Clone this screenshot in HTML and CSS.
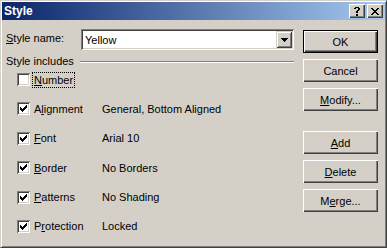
FILE: index.html
```html
<!DOCTYPE html>
<html lang="en">
<head>
    <meta charset="UTF-8">
    <title>Style</title>
    <link rel="stylesheet" href="styles.css">
</head>
<body>
<div class="window">
    <div class="titlebar">
        <span class="title">Style</span>
        <div class="caption-btns">
            <span class="cap-btn">
                <svg width="6" height="9" viewBox="0 0 6 9" shape-rendering="crispEdges"><path d="M1 0h4v1H1zM0 1h2v1H0zM4 1h2v2H4zM3 3h2v1H3zM2 4h2v2H2zM2 7h2v2H2z" fill="#000"/></svg>
            </span>
            <span class="cap-btn">
                <svg width="8" height="7" viewBox="0 0 8 7" shape-rendering="crispEdges"><path d="M0 0h2v1H0zM6 0h2v1H6zM1 1h2v1H1zM5 1h2v1H5zM2 2h4v1H2zM3 3h2v1H3zM2 4h4v1H2zM1 5h2v1H1zM5 5h2v1H5zM0 6h2v1H0zM6 6h2v1H6z" fill="#000"/></svg>
            </span>
        </div>
    </div>
    <div class="client">
        <div class="main">
            <div class="name-row">
                <span class="name-label"><u>S</u>tyle name:</span>
                <div class="combo">
                    <span class="combo-text">Yellow</span>
                    <span class="drop">
                        <svg width="7" height="4" viewBox="0 0 7 4" shape-rendering="crispEdges"><path d="M0 0h7v1H0zM1 1h5v1H1zM2 2h3v1H2zM3 3h1v1H3z" fill="#000"/></svg>
                    </span>
                </div>
            </div>
            <div class="group-head">
                <span>Style includes</span>
                <span class="etch"></span>
            </div>
            <div class="checks">
                <div class="row">
                    <span class="box"></span>
                    <span class="lbl focus"><u>N</u>umber</span>
                    <span class="val"></span>
                </div>
                <div class="row">
                    <span class="box"><svg width="7" height="7" viewBox="0 0 7 7" shape-rendering="crispEdges"><path d="M0 2h1v3H0zM1 3h1v3H1zM2 4h1v3H2zM3 3h1v3H3zM4 2h1v3H4zM5 1h1v3H5zM6 0h1v3H6z" fill="#000"/></svg></span>
                    <span class="lbl">A<u>l</u>ignment</span>
                    <span class="val">General, Bottom Aligned</span>
                </div>
                <div class="row">
                    <span class="box"><svg width="7" height="7" viewBox="0 0 7 7" shape-rendering="crispEdges"><path d="M0 2h1v3H0zM1 3h1v3H1zM2 4h1v3H2zM3 3h1v3H3zM4 2h1v3H4zM5 1h1v3H5zM6 0h1v3H6z" fill="#000"/></svg></span>
                    <span class="lbl"><u>F</u>ont</span>
                    <span class="val">Arial 10</span>
                </div>
                <div class="row">
                    <span class="box"><svg width="7" height="7" viewBox="0 0 7 7" shape-rendering="crispEdges"><path d="M0 2h1v3H0zM1 3h1v3H1zM2 4h1v3H2zM3 3h1v3H3zM4 2h1v3H4zM5 1h1v3H5zM6 0h1v3H6z" fill="#000"/></svg></span>
                    <span class="lbl"><u>B</u>order</span>
                    <span class="val">No Borders</span>
                </div>
                <div class="row">
                    <span class="box"><svg width="7" height="7" viewBox="0 0 7 7" shape-rendering="crispEdges"><path d="M0 2h1v3H0zM1 3h1v3H1zM2 4h1v3H2zM3 3h1v3H3zM4 2h1v3H4zM5 1h1v3H5zM6 0h1v3H6z" fill="#000"/></svg></span>
                    <span class="lbl"><u>P</u>atterns</span>
                    <span class="val">No Shading</span>
                </div>
                <div class="row">
                    <span class="box"><svg width="7" height="7" viewBox="0 0 7 7" shape-rendering="crispEdges"><path d="M0 2h1v3H0zM1 3h1v3H1zM2 4h1v3H2zM3 3h1v3H3zM4 2h1v3H4zM5 1h1v3H5zM6 0h1v3H6z" fill="#000"/></svg></span>
                    <span class="lbl">P<u>r</u>otection</span>
                    <span class="val">Locked</span>
                </div>
            </div>
        </div>
        <div class="buttons">
            <span class="btn default">OK</span>
            <span class="btn">Cancel</span>
            <span class="btn"><u>M</u>odify...</span>
            <span class="btn spaced"><u>A</u>dd</span>
            <span class="btn"><u>D</u>elete</span>
            <span class="btn">M<u>e</u>rge...</span>
        </div>
    </div>
</div>
</body>
</html>
```

FILE: styles.css
```css
*{
    margin: 0;
    padding: 0;
    box-sizing: border-box;
}
body{
    font-family: "Liberation Sans", Arial, sans-serif;
    font-size: 11px;
    color: #000;
    background: #fff;
}
u{
    text-underline-offset: 1px;
}
/*窗口外框*/
.window{
    width: 387px;
    height: 248px;
    background: #d4d0c8;
    border: 1px solid;
    border-color: #d4d0c8 #404040 #404040 #d4d0c8;
    box-shadow: inset 1px 1px #fff, inset -1px -1px #808080;
    padding: 1px;
}
/*标题栏*/
.titlebar{
    height: 18px;
    display: flex;
    align-items: center;
    padding-left: 2px;
    background: linear-gradient(to right, #0a246a, #a6caf0);
}
.title{
    color: #fff;
    font-weight: bold;
    font-size: 12px;
}
.caption-btns{
    margin-left: auto;
    margin-right: 2px;
    display: flex;
    gap: 2px;
}
.cap-btn{
    width: 16px;
    height: 14px;
    background: #d4d0c8;
    display: flex;
    align-items: center;
    justify-content: center;
    box-shadow: inset 1px 1px #fff, inset -1px -1px #404040, inset -2px -2px #808080;
}
.cap-btn svg{
    display: block;
}
/*内容区*/
.client{
    display: flex;
    margin-top: 1px;
    padding: 8px 5px 0 4px;
}
.main{
    width: 288px;
}
.name-row{
    display: flex;
    align-items: center;
    height: 21px;
}
.name-label{
    width: 75px;
    line-height: 13px;
    margin-top: -2px;
}
.combo{
    width: 213px;
    height: 21px;
    background: #fff;
    display: flex;
    align-items: center;
    padding: 2px;
    box-shadow: inset 1px 1px #808080, inset -1px -1px #fff, inset 2px 2px #404040, inset -2px -2px #d4d0c8;
}
.combo-text{
    padding-left: 2px;
}
.drop{
    margin-left: auto;
    width: 16px;
    height: 17px;
    background: #d4d0c8;
    display: flex;
    align-items: center;
    justify-content: center;
    box-shadow: inset 1px 1px #d4d0c8, inset -1px -1px #404040, inset 2px 2px #fff, inset -2px -2px #808080;
}
.drop svg{
    display: block;
}
/*分组标题*/
.group-head{
    display: flex;
    margin-top: 5px;
    height: 13px;
    line-height: 13px;
}
.etch{
    flex: 1;
    height: 2px;
    margin: 6px 0 0 6px;
    border-top: 1px solid #808080;
    border-bottom: 1px solid #fff;
}
/*复选框列表*/
.checks{
    margin-top: 5px;
    padding-left: 11px;
    display: grid;
    grid-template-rows: repeat(6, 13px);
    row-gap: 16.4px;
}
.row{
    display: flex;
    align-items: center;
    height: 13px;
}
.box{
    width: 13px;
    height: 13px;
    flex: none;
    background: #fff;
    padding: 3px;
    box-shadow: inset 1px 1px #808080, inset -1px -1px #fff, inset 2px 2px #404040, inset -2px -2px #d4d0c8;
}
.box svg{
    display: block;
}
.lbl{
    width: 70px;
    margin-left: 2px;
    padding: 0 1px;
    line-height: 14px;
    border: 1px dotted transparent;
}
.lbl.focus{
    width: auto;
    border-color: #000;
}
.val{
    white-space: nowrap;
}
/*右侧按钮*/
.buttons{
    width: 75px;
    margin-left: 9px;
    padding-top: 1px;
    display: flex;
    flex-direction: column;
    gap: 6px;
}
.btn{
    height: 23px;
    display: flex;
    align-items: center;
    justify-content: center;
    background: #d4d0c8;
    box-shadow: inset 1px 1px #fff, inset -1px -1px #404040, inset -2px -2px #808080;
}
.btn.default{
    border: 1px solid #000;
}
.btn.spaced{
    margin-top: 14px;
}
```
